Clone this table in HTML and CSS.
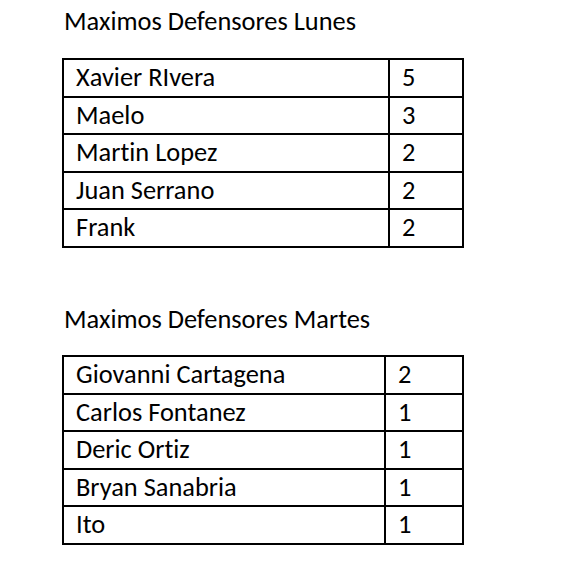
FILE: index.html
```html
<!DOCTYPE html>
<html lang="es">
<head>
<meta charset="utf-8">
<title>Maximos Defensores</title>
<link rel="stylesheet" href="styles.css">
</head>
<body>
<main class="page">
  <section class="block block-lunes">
    <h2 class="title">Maximos Defensores Lunes</h2>
    <table class="stats stats-lunes">
      <tr><td class="name">Xavier RIvera</td><td class="num">5</td></tr>
      <tr><td class="name">Maelo</td><td class="num">3</td></tr>
      <tr><td class="name">Martin Lopez</td><td class="num">2</td></tr>
      <tr><td class="name">Juan Serrano</td><td class="num">2</td></tr>
      <tr><td class="name">Frank</td><td class="num">2</td></tr>
    </table>
  </section>
  <section class="block block-martes">
    <h2 class="title">Maximos Defensores Martes</h2>
    <table class="stats stats-martes">
      <tr><td class="name">Giovanni Cartagena</td><td class="num">2</td></tr>
      <tr><td class="name">Carlos Fontanez</td><td class="num">1</td></tr>
      <tr><td class="name">Deric Ortiz</td><td class="num">1</td></tr>
      <tr><td class="name">Bryan Sanabria</td><td class="num">1</td></tr>
      <tr><td class="name">Ito</td><td class="num">1</td></tr>
    </table>
  </section>
</main>
</body>
</html>
```

FILE: styles.css
```css
html, body {
  margin: 0;
  padding: 0;
  background: #ffffff;
}

body {
  font-family: Carlito, Calibri, Lato, "Liberation Sans", sans-serif;
  font-variant-ligatures: none;
  font-feature-settings: "liga" 0, "clig" 0;
  color: #000000;
  font-size: 26.4px;
}

.page {
  padding: 0 0 0 62px;
  display: flex;
  flex-direction: column;
}

.block {
  display: flex;
  flex-direction: column;
}

.title {
  margin: 0;
  font-weight: normal;
  font-size: 26.4px;
  line-height: 32px;
  padding-left: 2px;
}

.block-lunes {
  padding-top: 5px;
}

.block-lunes .title {
  margin-bottom: 21px;
}

.block-martes {
  margin-top: 55px;
}

.block-martes .title {
  margin-bottom: 20px;
}

.stats {
  border-collapse: collapse;
  width: 402px;
  table-layout: fixed;
}

.stats td {
  border: 2px solid #000000;
  padding: 0 11px 0 12px;
  height: 35.6px;
  line-height: 35.6px;
  white-space: nowrap;
  vertical-align: middle;
}

.stats-lunes .name {
  width: 301px;
}

.stats-martes .name {
  width: 297px;
}
```
